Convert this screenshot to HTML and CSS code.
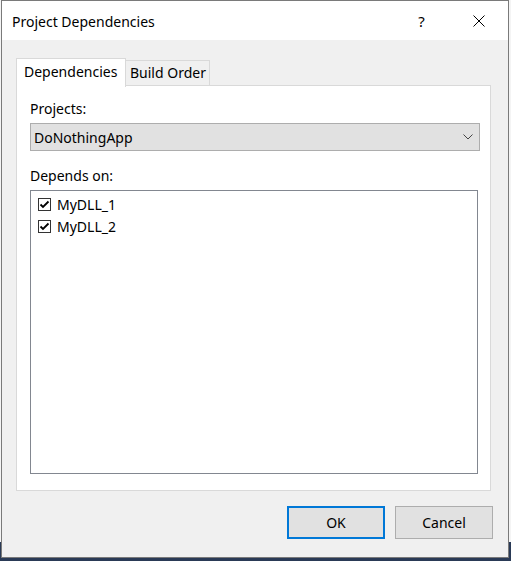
FILE: index.html
```html
<!DOCTYPE html>
<html lang="en">
<head>
    <meta charset="UTF-8">
    <title>Project Dependencies</title>
    <link rel="stylesheet" href="styles.css">
</head>
<body>
    <div class="window">
        <div class="titlebar">
            <span class="title">Project Dependencies</span>
            <span class="help">?</span>
            <span class="close">
                <svg width="12" height="12" viewBox="0 0 12 12"><path d="M0.5 0.5 L11.5 11.5 M11.5 0.5 L0.5 11.5" stroke="#000" stroke-width="1" fill="none"/></svg>
            </span>
        </div>
        <div class="content">
            <div class="tabs">
                <div class="tab active">Dependencies</div>
                <div class="tab">Build Order</div>
            </div>
            <div class="panel">
                <div class="label">Projects:</div>
                <div class="select">
                    <span>DoNothingApp</span>
                    <svg width="10" height="6" viewBox="0 0 10 6"><path d="M0.5 0.5 L5 5 L9.5 0.5" stroke="#444" stroke-width="1" fill="none"/></svg>
                </div>
                <div class="label depends">Depends on:</div>
                <div class="listbox">
                    <div class="item">
                        <span class="check"><svg width="11" height="11" viewBox="0 0 11 11"><path d="M1.5 5.5 L4 8 L9.5 2.5" stroke="#000" stroke-width="1.8" fill="none"/></svg></span>
                        MyDLL_1
                    </div>
                    <div class="item">
                        <span class="check"><svg width="11" height="11" viewBox="0 0 11 11"><path d="M1.5 5.5 L4 8 L9.5 2.5" stroke="#000" stroke-width="1.8" fill="none"/></svg></span>
                        MyDLL_2
                    </div>
                </div>
            </div>
            <div class="buttons">
                <button class="btn default">OK</button>
                <button class="btn">Cancel</button>
            </div>
        </div>
    </div>
</body>
</html>
```

FILE: styles.css
```css
html {
    background: linear-gradient(to bottom, #f4f4f4 0, #f4f4f4 542px, #2a3a56 542px);
    min-height: 100%;
}
body {
    margin: 0;
    font-family: "Noto Sans", sans-serif;
    font-size: 14px;
    color: #000;
    height: 561px;
}
.window {
    margin-left: 1px;
    width: 506px;
    height: 556px;
    border: 1px solid #7a7a7a;
    background-color: #f0f0f0;
}
.titlebar {
    height: 39px;
    background-color: #fff;
    display: flex;
    align-items: center;
}
.title {
    flex: 1;
    padding-left: 10px;
    padding-top: 2px;
    font-size: 14px;
}
.help {
    width: 57px;
    text-align: center;
    font-size: 15px;
}
.close {
    width: 58px;
    display: flex;
    justify-content: center;
}
.content {
    padding: 18px 16px 0 14px;
}
.tabs {
    display: flex;
    align-items: flex-end;
    height: 28px;
    position: relative;
    z-index: 1;
    margin-bottom: -1px;
}
.tab {
    height: 25px;
    line-height: 24px;
    padding: 0 4px;
    border: 1px solid #d9d9d9;
    border-bottom: none;
    background-color: #f0f0f0;
    box-sizing: border-box;
    white-space: nowrap;
    margin-bottom: 1px;
}
.tab.active {
    height: 29px;
    width: 110px;
    padding: 0 7px;
    line-height: 26px;
    background-color: #fff;
    margin-bottom: -1px;
}
.tab:not(.active) {
    width: 84px;
    border-left: none;
}
.panel {
    width: 475px;
    height: 406px;
    box-sizing: border-box;
    border: 1px solid #d9d9d9;
    background-color: #fff;
    padding: 13px 10px 0 13px;
}
.label {
    line-height: 20px;
}
.select {
    margin-top: 4px;
    height: 28px;
    box-sizing: border-box;
    border: 1px solid #adadad;
    background-color: #e1e1e1;
    display: flex;
    align-items: center;
    justify-content: space-between;
    padding: 0 6px 0 3px;
}
.depends {
    margin-top: 15px;
}
.listbox {
    margin-top: 4px;
    margin-right: 2px;
    height: 284px;
    box-sizing: border-box;
    border: 1px solid #828790;
    background-color: #fff;
    padding-top: 2px;
}
.item {
    height: 22px;
    display: flex;
    align-items: center;
    padding-left: 7px;
}
.check {
    width: 11px;
    height: 11px;
    border: 1px solid #333;
    margin-right: 6px;
    display: flex;
}
.buttons {
    display: flex;
    justify-content: flex-end;
    gap: 10px;
    margin-top: 15px;
    margin-right: -1px;
}
.btn {
    width: 98px;
    height: 33px;
    font-family: inherit;
    font-size: 14px;
    background-color: #e1e1e1;
    border: 1px solid #adadad;
    color: #000;
    padding: 0;
}
.btn.default {
    border: 2px solid #0078d7;
}
```
